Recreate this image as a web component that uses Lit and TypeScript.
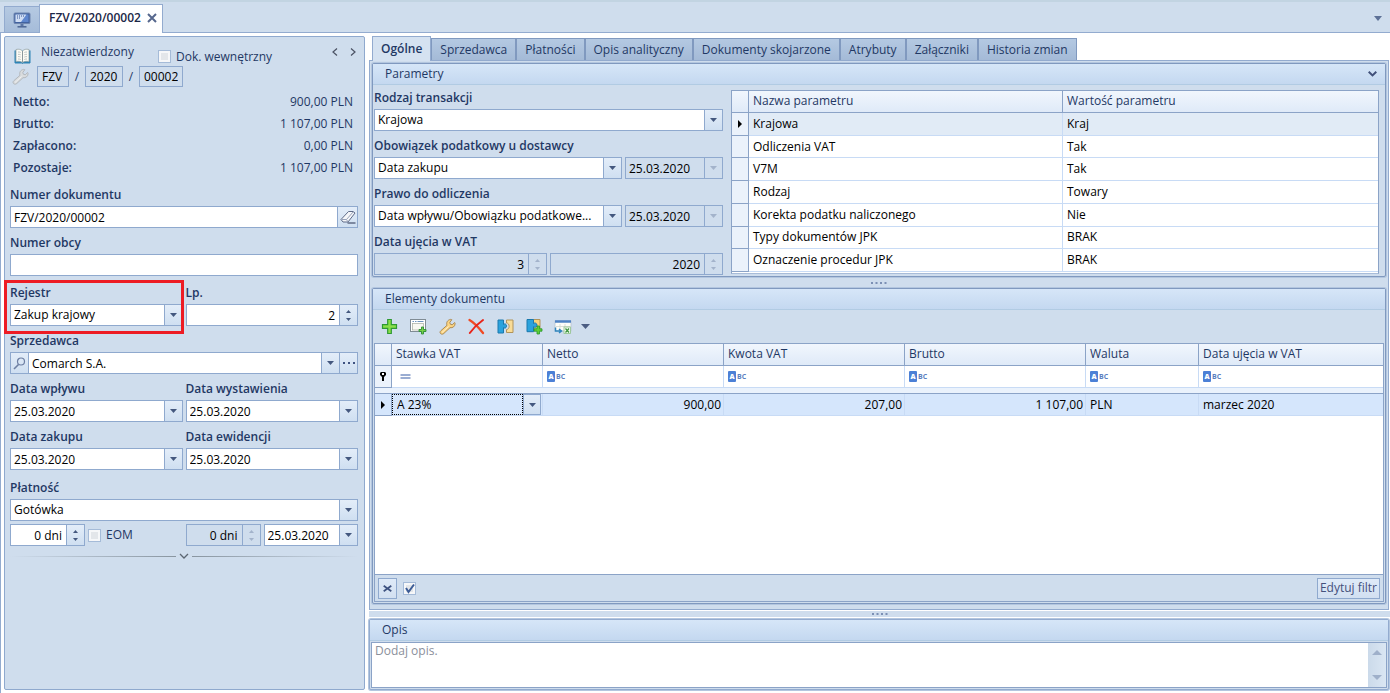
import { LitElement, html, css, svg, TemplateResult } from "lit";
import { customElement } from "lit/decorators.js";

const down = svg`<svg class="tri" width="7" height="4" viewBox="0 0 7 4"><path d="M0 0h7L3.500 4z" fill="currentColor"/></svg>`;
const up = svg`<svg class="tri" width="5" height="3" viewBox="0 0 5 3"><path d="M0 3h5L2.500 0z" fill="currentColor"/></svg>`;
const downSmall = svg`<svg class="tri" width="5" height="3" viewBox="0 0 5 3"><path d="M0 0h5L2.500 3z" fill="currentColor"/></svg>`;
const marker = svg`<svg class="tri" width="4" height="8" viewBox="0 0 4 8"><path d="M0 0l4 4-4 4z" fill="#000"/></svg>`;

const wrench = (fill: string, stroke: string) => svg`
  <svg width="17" height="17" viewBox="0 0 17 17"><path d="M1.500 15.500c-.8-1-.5-2 .4-2.800L8 7.300C7 4.500 8.500 2 11.500 1.400l1.300.3-2 2.700.5 1.800 1.900.6 2.500-2.300.4 1.200c-.2 2.800-2.400 4.400-5.100 4L5 15.300c-1 1-2.500 1.200-3.500.2z" fill=${fill} stroke=${stroke} stroke-width="1"/><path d="M3 14.500l6.500-6" stroke="#fff" stroke-width="1" opacity=".6"/></svg>`;

const icons = {
  monitor: svg`<svg width="18" height="16" viewBox="0 0 18 16"><rect x="1" y="1" width="16" height="10.500" rx="1" fill="#41629f" stroke="#6f86b0"/><path d="M2.500 2.500h13v7.500h-13z" fill="#5e86cd"/><path d="M2.500 2.500h11L8 10H2.500z" fill="#e3ecf9" opacity=".85"/><path d="M4 4h1M6 4h1M8 4h1M10 4h1M4 6h1M6 6h1" stroke="#345595"/><path d="M7.500 12h3v2h-3z" fill="#5c76a5"/><path d="M4.500 14.800h9" stroke="#4b6594" stroke-width="1.500"/></svg>`,
  book: svg`<svg width="17" height="16" viewBox="0 0 17 16"><path d="M1 2.500v12.500h6.500l1 .5 1-.5H16V2.500" fill="#2c83b5" stroke="#2c83b5"/><path d="M2 1.500c3-.8 5 0 6.500 1.500C10 1.500 12 .7 15 1.500v12c-3-.6-5 0-6.500 1-1.500-1-3.500-1.600-6.500-1z" fill="#fdfcf5" stroke="#98a6a8" stroke-width=".8"/><path d="M8.500 3v11" stroke="#8b989c" stroke-width="1"/><path d="M4 4c1 0 2 .1 2.700.5M4 6.300c1 0 2 .1 2.700.5M4 8.600c1 0 2 .1 2.700.5M4 11c1 0 2 .1 2.700.5M13 4c-1 0-2 .1-2.700.5M13 6.300c-1 0-2 .1-2.700.5M13 8.600c-1 0-2 .1-2.700.5M13 11c-1 0-2 .1-2.700.5" stroke="#a9b4b6" fill="none" stroke-width=".8"/></svg>`,
  eraser: svg`<svg width="16" height="16" viewBox="0 0 16 16"><path d="M1 10.500L8.500 2.500h4.500l2 1.500-7 9H3z" fill="#f5f6f9" stroke="#5f6b88"/><path d="M1.500 10.500H6.500l7-8M6.500 10.500l1.500 2.500" stroke="#98a3b9" fill="none"/><path d="M7.500 14h8" stroke="#4e5975" stroke-width="1.300"/></svg>`,
  search: svg`<svg width="13" height="13" viewBox="0 0 13 13"><circle cx="8" cy="4.500" r="3.500" fill="none" stroke="#6d7fa3" stroke-width="1.200"/><path d="M5.500 7.500L1 12" stroke="#6d7fa3" stroke-width="1.600"/></svg>`,
  dots: svg`<svg class="tri" width="12" height="2" viewBox="0 0 12 2"><path d="M0 0h2v2H0zM5 0h2v2H5zM10 0h2v2h-2z" fill="#3f5381"/></svg>`,
  close: svg`<svg width="10" height="10" viewBox="0 0 10 10"><path d="M1 1l8 8M9 1L1 9" stroke="#56678d" stroke-width="2"/></svg>`,
  prev: svg`<svg width="6" height="8" viewBox="0 0 6 8"><path d="M5 .5L1 4l4 3.500" fill="none" stroke="#4a5163" stroke-width="1.200"/></svg>`,
  next: svg`<svg width="6" height="8" viewBox="0 0 6 8"><path d="M1 .5L5 4 1 7.500" fill="none" stroke="#4a5163" stroke-width="1.200"/></svg>`,
  fold: svg`<svg width="10" height="6" viewBox="0 0 10 6"><path d="M1 1l4 4 4-4" fill="none" stroke="#5c6672" stroke-width="1.300"/></svg>`,
  collapse: svg`<svg width="9" height="6" viewBox="0 0 9 6"><path d="M.7.8l3.800 3.600L8.300.8" fill="none" stroke="#40507a" stroke-width="2"/></svg>`,
  pin: svg`<svg class="tri" width="6" height="9" viewBox="0 0 6 9"><path d="M1 0h4l1 1v2L4 5v4H2V5L0 3V1z" fill="#000"/><path d="M2 1h2v2H2z" fill="#fff"/></svg>`,
  equal: svg`<svg width="11" height="5" viewBox="0 0 11 5"><path d="M.5 1h10M.5 4h10" stroke="#7a93c4" stroke-width="1.300"/></svg>`,
  grip: svg`<svg width="16" height="2" viewBox="0 0 16 2"><path d="M0 0h2v2H0zM4.500 0h2v2h-2zM9 0h2v2H9zM13.500 0h2v2h-2z" fill="#7c90b4"/></svg>`,
};

const tools: [string, TemplateResult | unknown][] = [
  ["Dodaj", svg`<svg width="17" height="17" viewBox="0 0 17 17"><path d="M6.700 1.500h3.600v5.200h5.200v3.600h-5.200v5.200H6.700v-5.200H1.500V6.700h5.200z" fill="#8be04a" stroke="#2f9a33" stroke-width="1.200"/></svg>`],
  ["Dodaj z listy", svg`<svg width="17" height="17" viewBox="0 0 17 17"><rect x=".5" y="1.500" width="15" height="12" fill="#fff" stroke="#7f8b94"/><path d="M2.500 3.500h1.500M5 3.500h1.500M7.500 3.500h6" stroke="#6d93bd" stroke-width="1"/><rect x="2.500" y="5.500" width="11" height="6.500" fill="#f8f8f2" stroke="#a5aba0" stroke-width=".7"/><path d="M11.500 9h2v2.500H16v2h-2.500V16h-2v-2.500H9v-2h2.500z" fill="#76d045" stroke="#2d8f35" stroke-width=".9"/></svg>`],
  ["Zmień", wrench("#fbd583", "#ab8a55")],
  ["Usuń", svg`<svg width="17" height="17" viewBox="0 0 17 17"><path d="M1.500 2C6 4.500 11 10 15 15" fill="none" stroke="#f04a24" stroke-width="2.300" stroke-linecap="round"/><path d="M15 2C10 5.500 5 10.500 1.800 15" fill="none" stroke="#e8241a" stroke-width="2" stroke-linecap="round"/></svg>`],
  ["Połącz", svg`<svg width="17" height="17" viewBox="0 0 17 17"><path d="M1 2h5.500v4.500c.5-1 3-1 3 1.500s-2.500 2.500-3 1.500V15H1z" fill="#2ba2dc" stroke="#1a78ad"/><path d="M9.500 2h6.500v12.500H9.500v-3c3.500 0 3.500-6.500 0-6.500z" fill="#f9dc97" stroke="#b1945a"/></svg>`],
  ["Dołącz", svg`<svg width="17" height="17" viewBox="0 0 17 17"><path d="M7.500 1.500h6.500v11H7.500z" fill="#f9d27b" stroke="#b1945a"/><path d="M1 1.500h6.500v4c1-1 3.500-.5 3.500 1.700s-2.500 2.600-3.500 1.500v5H1z" fill="#2ba2dc" stroke="#1a78ad"/><path d="M11 8h2.500v2.800H16v2.400h-2.500V16H11v-2.800H8v-2.400h3z" fill="#5ed035" stroke="#25962c" stroke-width=".8"/></svg>`],
  ["Eksport", svg`<svg width="18" height="17" viewBox="0 0 18 17"><rect x="1" y="3" width="16" height="10" fill="#fdfdf8" stroke="#b9c4cf" stroke-width=".8"/><path d="M1 3.500h16" stroke="#4e82c4" stroke-width="2.500"/><path d="M2 8.500h14M6 6v7M11 6v7" stroke="#d2d7cf" stroke-width=".8"/><path d="M1.500 9.500v3.500H7M5 11l2.500 2L5 15" stroke="#3186bf" fill="none" stroke-width="1.500"/><rect x="10" y="9" width="6.500" height="6.500" fill="#f2fbee" stroke="#8fc08b" stroke-width=".8"/><path d="M11.500 10.500l3.500 4M15 10.500l-3.500 4" stroke="#3c943c" stroke-width="1.200"/></svg>`],
];

const params = [
  ["Krajowa", "Kraj"],
  ["Odliczenia VAT", "Tak"],
  ["V7M", "Tak"],
  ["Rodzaj", "Towary"],
  ["Korekta podatku naliczonego", "Nie"],
  ["Typy dokumentów JPK", "BRAK"],
  ["Oznaczenie procedur JPK", "BRAK"],
];

const totals = [
  ["Netto:", "900,00 PLN"],
  ["Brutto:", "1 107,00 PLN"],
  ["Zapłacono:", "0,00 PLN"],
  ["Pozostaje:", "1 107,00 PLN"],
];

const tabs = ["Ogólne", "Sprzedawca", "Płatności", "Opis analityczny", "Dokumenty skojarzone", "Atrybuty", "Załączniki", "Historia zmian"];

@customElement("app-root")
export class AppRoot extends LitElement {
  static styles = css`
    :host { display: flex; flex-direction: column; height: 100vh; box-sizing: border-box; overflow: hidden; background: #fff; color: #1f3864; font: 12px/16px "Open Sans", "Noto Sans", sans-serif; }
    * { box-sizing: border-box; }
    button, input, select, textarea { font: inherit; color: inherit; margin: 0; border: 0; border-radius: 0; padding: 0; background: none; outline: 0; }
    button { display: flex; align-items: center; justify-content: center; }
    svg { display: block; flex: none; }
    .grow { flex: 1; min-width: 0; }

    .windows { display: flex; align-items: flex-end; height: 33px; flex: none; padding-left: 4px; background: #cfdded; border-top: 2px solid #c2d4e2; border-bottom: 1px solid #93abcf; }
    .home { width: 36px; height: 26px; border: 1px solid #93abcf; border-bottom: 0; background: linear-gradient(#b5c9e2, #a5bcd9); }
    .doc { display: flex; align-items: center; gap: 6px; height: 29px; margin: 0 0 -1px -1px; padding: 0 5px 2px 9px; border: 1px solid #93abcf; border-bottom: 0; background: #fff; color: #1b2747; font-weight: 600; }
    .menu { align-self: center; margin: 2px 7px 0 auto; width: 10px; height: 10px; color: #5d7197; }

    .work { flex: 1; min-height: 0; display: flex; gap: 4px; padding: 3px 1px 3px 3px; border-left: 1px solid #93abcf; }
    .side { width: 361px; flex: none; padding: 6px 6px 0 5px; border: 1px solid #8fa9ce; border-radius: 2px; background: #cfdded; }
    .head { display: flex; height: 23px; align-items: center; }
    .head .ico { margin: 3px 10px 0 4px; }
    .status { width: 117px; padding-bottom: 5px; }
    .check { display: flex; align-items: center; gap: 5px; }
    .check.inner { padding-top: 4px; }
    input[type="checkbox"] { appearance: none; width: 13px; height: 13px; flex: none; border: 1px solid #a5bbd8; background: #e3e6ea; box-shadow: inset 0 0 0 2px #f6f7f9; }
    .nav { display: flex; gap: 12px; margin: 0 2px 6px auto; }
    .number { display: flex; align-items: center; height: 21px; margin-bottom: 4px; }
    .number .ico { width: 27px; padding-left: 2px; }
    .number input { height: 21px; border: 1px solid #8fa9ce; padding: 0 4px; color: #000; }
    .n3 { width: 32px; } .n4 { width: 38px; } .n5 { width: 44px; }
    .number i { font-style: normal; width: 16px; text-align: center; }
    .totals { margin: 0; padding: 0 5px 0 3px; display: grid; grid-template-columns: auto 1fr; grid-auto-rows: 22px; line-height: 22px; }
    .totals dt { font-weight: 600; }
    .totals dd { margin: 0; text-align: right; }
    .fields { display: flex; flex-direction: column; gap: 4px; padding-top: 5px; }
    .pair { display: grid; grid-template-columns: 1fr 1fr; gap: 3px; }
    .spaced { margin-top: 2px; }
    .field { min-width: 0; }
    .field > label, .caption { display: block; height: 22px; line-height: 22px; font-weight: 600; white-space: nowrap; }
    .marked { position: relative; }
    .marked::after { content: ""; position: absolute; inset: -2px -1px -8px -6px; border: 3px solid #ed1c24; pointer-events: none; z-index: 1; }
    .box { display: flex; width: 100%; height: 22px; border: 1px solid #8fa9ce; background: #fff; color: #000; }
    .box > input, .box > select { flex: 1; width: 0; min-width: 0; height: 20px; padding: 0 3px; appearance: none; opacity: 1; }
    .box > .num { text-align: right; padding-right: 4px; }
    .btn { width: 18px; flex: none; border-left: 1px solid #8fa9ce; background: linear-gradient(#e3edf9, #cfdff1); color: #44587f; display: flex; flex-direction: column; align-items: center; justify-content: center; gap: 5px; pointer-events: none; }
    button.btn { pointer-events: auto; }
    .btn.first { border-left: 0; border-right: 1px solid #8fa9ce; }
    .btn.wide { width: 20px; }
    .off { background: #cfdded; }
    .off .btn { background: none; color: #a3b3cb; }
    .row { display: flex; gap: 3px; }
    .pay { margin-top: 3px; }
    .w-days { width: 75px; flex: none; }
    .sep { display: flex; align-items: center; height: 16px; margin-top: 2px; gap: 3px; }
    .sep span { flex: 1; height: 1px; background: linear-gradient(90deg, transparent, #8995a0); }
    .sep span:last-child { background: linear-gradient(270deg, transparent, #8995a0); }

    .main { flex: 1; min-width: 0; display: flex; flex-direction: column; }
    .tabs { display: flex; align-items: flex-end; height: 24px; padding-left: 3px; flex: none; position: relative; }
    .tab { height: 22px; padding: 0 8px; border: 1px solid #8099bf; border-bottom: 0; background: linear-gradient(#b4c9e2, #a4bad7); white-space: nowrap; }
    .tab.on { height: 25px; margin: 0 0 -1px; background: #d5e2f1; font-weight: 600; border-color: #93abcf; }
    .page { flex: 1; min-height: 0; display: flex; flex-direction: column; padding: 2px 2px 5px; border: 1px solid #93abcf; background: #cfdded; }
    .group { display: flex; flex-direction: column; border: 1px solid #8099bf; border-radius: 2px; background: #cfdded; box-shadow: 0 0 0 1px #b3c6df; }
    .title { display: flex; align-items: center; justify-content: space-between; height: 21px; flex: none; margin: 0; padding: 0 8px 0 12px; font-size: 12px; font-weight: 400; background: linear-gradient(#d6e6f8, #c4d8f0); border-bottom: 1px solid #b1cbe3; }
    .split { height: 11px; flex: none; display: flex; align-items: center; justify-content: center; }
    .split.thin { height: 8px; background: #cfdded; border: solid #fff; border-width: 1px 0; margin-right: -1px; }
    .params { display: flex; gap: 8px; padding: 2px 6px 0 1px; }
    .params .fields { width: 349px; padding: 0 0 1px; flex: none; }
    .w-when { width: 98px; flex: none; }

    table { border-collapse: separate; border-spacing: 0; table-layout: fixed; width: 100%; }
    th { font-weight: 400; text-align: left; color: #1f3864; background: linear-gradient(#f1f6fd, #dfeaf8); border: solid #8ba3c7; border-width: 0 1px 1px 0; padding: 0 4px 2px; }
    td { padding: 0 4px; color: #000; border: solid #c8dbf5; border-width: 0 1px 1px 0; white-space: nowrap; overflow: hidden; }
    th:last-child, td:last-child { border-right: 0; }
    td:first-child { padding: 0; background: #ebf2fb; border-color: #8ba3c7; }
    td:first-child > svg { margin: 0 auto; }
    .frame { border: 1px solid #8ba3c7; background: #fff; }
    .ptable { height: 184px; margin-top: 3px; border-bottom-color: #a8bcd8; }
    .ptable table { height: 181px; }
    .ptable th { height: 22px; }
    .c-mark { width: 17px; } .c-name { width: 314px; }
    .ptable tbody tr:first-child td + td { background: #e1ebf6; }

    .items { flex: 1; min-height: 0; }
    .tools { display: flex; align-items: center; gap: 13px; height: 33px; padding-left: 8px; flex: none; }
    .tools button { width: 16px; height: 17px; }
    .tools .more { margin-left: -7px; color: #4c5d82; }
    .grid { flex: 1; min-height: 0; display: flex; flex-direction: column; margin: 0 1px 1px; }
    .grid th { height: 22px; }
    .c-rate { width: 151px; } .c-sum { width: 181px; } .c-cur { width: 113px; }
    .filter td { height: 22px; }
    .grid .gap td { height: 6px; background: #eaf2fc; border-right: 0; border-color: #8ba3c7; }
    .line td { height: 22px; background: #d5e6fc; }
    .line .r { text-align: right; padding-right: 2px; }
    .filter td > svg { margin-left: 4px; }
    .filter td:first-child > svg { margin: 0 auto; }
    .line .edit { padding: 0 1px 0 0; }
    .cell { display: flex; height: 21px; }
    .cell select { flex: 1; min-width: 0; padding: 0 4px; appearance: none; border: 1px dotted #000; }
    .cell .btn { border: 1px solid #8fa9ce; }
    .abc { display: flex; align-items: center; font-size: 7px; line-height: 11px; font-weight: 700; color: #5c7fbf; }
    .abc b { width: 8px; background: #4c80d6; color: #fff; text-align: center; margin-right: 1px; border-radius: 1px; }
    .foot { display: flex; align-items: center; gap: 6px; height: 27px; margin-top: auto; padding: 0 3px; border-top: 1px solid #8ba3c7; background: #cfdded; }
    .foot button { height: 21px; border: 1px solid #8fa9ce; background: linear-gradient(#dfeaf8, #d2e0f1); color: #44507c; }
    .foot .x { width: 19px; }
    .foot .edit { margin-left: auto; padding: 0 2px; }
    .foot .check { position: relative; }
    .foot .check svg { position: absolute; left: 2px; top: 1px; pointer-events: none; }

    .note { flex: none; margin-top: 1px; border-color: #93abcf; padding-bottom: 1px; }
    .note .title { margin-bottom: 1px; }
    .memo { display: flex; height: 46px; margin: 0 1px; border: 1px solid #8ba3c7; background: #fff; }
    .memo textarea { flex: 1; resize: none; padding: 0 3px; overflow: hidden; color: #000; }
    .memo textarea::placeholder { color: #8b8f9b; opacity: 1; }
    .scroll { width: 18px; display: flex; flex-direction: column; align-items: center; justify-content: space-between; padding: 7px 0; background: linear-gradient(90deg, #cbdaea, #dae6f3); color: #9fb0ca; }
  `;

  private label(id: string, text: string) {
    return text ? html`<label for=${id}>${text}</label>` : "";
  }

  private combo(id: string, text: string, value: string) {
    return html`<div class="field grow">${this.label(id, text)}
      <div class="box"><select id=${id} aria-label=${text || value}><option>${value}</option></select><span class="btn">${down}</span></div></div>`;
  }

  private date(id: string, text: string, value: string, disabled = false) {
    return html`<div class="field">${this.label(id, text)}
      <div class="box ${disabled ? "off" : ""}"><input id=${id} aria-label=${text || "Data"} .value=${value} ?disabled=${disabled} /><button class="btn" aria-label="Kalendarz" ?disabled=${disabled}>${down}</button></div></div>`;
  }

  private spin(id: string, text: string, value: string, disabled = false) {
    return html`<div class="field">${this.label(id, text)}
      <div class="box ${disabled ? "off" : ""}"><input class="num" id=${id} aria-label=${text || "Liczba"} .value=${value} ?disabled=${disabled} /><span class="btn">${up}${downSmall}</span></div></div>`;
  }

  private side() {
    return html`<aside class="side">
      <div class="head">
        <span class="ico">${icons.book}</span><span class="status">Niezatwierdzony</span>
        <label class="check inner"><input type="checkbox" />Dok. wewnętrzny</label>
        <span class="nav"><button aria-label="Poprzedni">${icons.prev}</button><button aria-label="Następny">${icons.next}</button></span>
      </div>
      <div class="number">
        <span class="ico">${wrench("#d9dcde", "#b3b8bd")}</span>
        <input class="n3" aria-label="Symbol" value="FZV" /><i>/</i><input class="n4" aria-label="Rok" value="2020" /><i>/</i><input class="n5" aria-label="Numer" value="00002" />
      </div>
      <dl class="totals">${totals.map(([k, v]) => html`<dt>${k}</dt><dd>${v}</dd>`)}</dl>
      <div class="fields">
        <div class="field">${this.label("doc", "Numer dokumentu")}
          <div class="box"><input id="doc" value="FZV/2020/00002" /><button class="btn wide" aria-label="Wyczyść">${icons.eraser}</button></div></div>
        <div class="field">${this.label("ext", "Numer obcy")}<div class="box"><input id="ext" /></div></div>
        <div class="pair spaced"><div class="marked">${this.combo("reg", "Rejestr", "Zakup krajowy")}</div>${this.spin("lp", "Lp.", "2")}</div>
        <div class="field">${this.label("seller", "Sprzedawca")}
          <div class="box"><button class="btn first" aria-label="Szukaj">${icons.search}</button><input id="seller" value="Comarch S.A." /><button class="btn" aria-label="Rozwiń">${down}</button><button class="btn" aria-label="Wybierz">${icons.dots}</button></div></div>
        <div class="pair">${this.date("d1", "Data wpływu", "25.03.2020")}${this.date("d2", "Data wystawienia", "25.03.2020")}</div>
        <div class="pair">${this.date("d3", "Data zakupu", "25.03.2020")}${this.date("d4", "Data ewidencji", "25.03.2020")}</div>
        <div class="pay">${this.combo("pay", "Płatność", "Gotówka")}</div>
      </div>
      <div class="pair pay">
        <div class="row"><div class="w-days">${this.spin("days", "", "0 dni")}</div><label class="check"><input type="checkbox" />EOM</label></div>
        <div class="row"><div class="w-days">${this.spin("days2", "", "0 dni", true)}</div><div class="grow">${this.date("due", "", "25.03.2020")}</div></div>
      </div>
      <div class="sep"><span></span>${icons.fold}<span></span></div>
    </aside>`;
  }

  private parameters() {
    return html`<section class="group">
      <h2 class="title">Parametry ${icons.collapse}</h2>
      <div class="params">
        <div class="fields">
          ${this.combo("kind", "Rodzaj transakcji", "Krajowa")}
          <div><label class="caption" for="duty">Obowiązek podatkowy u dostawcy</label>
            <div class="row">${this.combo("duty", "", "Data zakupu")}<div class="w-when">${this.date("dutyDate", "", "25.03.2020", true)}</div></div></div>
          <div><label class="caption" for="right">Prawo do odliczenia</label>
            <div class="row">${this.combo("right", "", "Data wpływu/Obowiązku podatkowe...")}<div class="w-when">${this.date("rightDate", "", "25.03.2020", true)}</div></div></div>
          <div><label class="caption" for="month">Data ujęcia w VAT</label>
            <div class="pair">${this.spin("month", "", "3", true)}${this.spin("year", "", "2020", true)}</div></div>
        </div>
        <div class="frame ptable grow"><table>
          <colgroup><col class="c-mark" /><col class="c-name" /><col /></colgroup>
          <thead><tr><th></th><th>Nazwa parametru</th><th>Wartość parametru</th></tr></thead>
          <tbody>${params.map(([k, v], i) => html`<tr><td>${i === 0 ? marker : ""}</td><td>${k}</td><td>${v}</td></tr>`)}</tbody>
        </table></div>
      </div>
    </section>`;
  }

  private items() {
    const abc = html`<td><span class="abc"><b>A</b>BC</span></td>`;
    return html`<section class="group items">
      <h2 class="title">Elementy dokumentu</h2>
      <div class="tools">${tools.map(([name, icon]) => html`<button aria-label=${name}>${icon}</button>`)}<button class="more" aria-label="Więcej"><svg width="9" height="5" viewBox="0 0 9 5"><path d="M0 0h9L4.500 5z" fill="currentColor"/></svg></button></div>
      <div class="grid frame">
        <table>
          <colgroup><col class="c-mark" /><col class="c-rate" /><col class="c-sum" /><col class="c-sum" /><col class="c-sum" /><col class="c-cur" /><col /></colgroup>
          <thead><tr><th></th><th>Stawka VAT</th><th>Netto</th><th>Kwota VAT</th><th>Brutto</th><th>Waluta</th><th>Data ujęcia w VAT</th></tr></thead>
          <tbody>
            <tr class="filter"><td>${icons.pin}</td><td>${icons.equal}</td>${abc}${abc}${abc}${abc}${abc}</tr>
            <tr class="gap"><td colspan="7"></td></tr>
            <tr class="line"><td>${marker}</td><td class="edit"><div class="cell"><select aria-label="Stawka VAT"><option>A 23%</option></select><span class="btn">${down}</span></div></td>
              <td class="r">900,00</td><td class="r">207,00</td><td class="r">1 107,00</td><td>PLN</td><td>marzec 2020</td></tr>
          </tbody>
        </table>
        <div class="foot">
          <button class="x" aria-label="Usuń filtr"><svg width="9" height="7" viewBox="0 0 9 7"><path d="M.7.700l7.600 5.600M8.300.700L.7 6.300" stroke="#3f5381" stroke-width="1.700"/></svg></button>
          <label class="check"><input type="checkbox" checked aria-label="Filtr aktywny" /><svg width="10" height="11" viewBox="0 0 10 11"><path d="M1 5l2.500 4L9 1.500" fill="none" stroke="#3c5c96" stroke-width="2"/></svg></label>
          <button class="edit">Edytuj filtr</button>
        </div>
      </div>
    </section>`;
  }

  render() {
    return html`
      <header class="windows">
        <button class="home" aria-label="Pulpit">${icons.monitor}</button>
        <div class="doc">FZV/2020/00002 <button aria-label="Zamknij">${icons.close}</button></div>
        <button class="menu" aria-label="Lista okien"><svg width="8" height="5" viewBox="0 0 8 5"><path d="M0 0h8L4 5z" fill="currentColor"/></svg></button>
      </header>
      <div class="work">
        ${this.side()}
        <main class="main">
          <nav class="tabs" role="tablist">${tabs.map((t, i) => html`<button role="tab" class="tab ${i === 0 ? "on" : ""}">${t}</button>`)}</nav>
          <div class="page">
            ${this.parameters()}
            <div class="split">${icons.grip}</div>
            ${this.items()}
          </div>
          <div class="split thin">${icons.grip}</div>
          <section class="group note">
            <h2 class="title">Opis</h2>
            <div class="memo"><textarea aria-label="Opis" placeholder="Dodaj opis."></textarea><div class="scroll"><svg width="10" height="5" viewBox="0 0 10 5"><path d="M0 5h10L5 0z" fill="currentColor"/></svg><svg width="10" height="5" viewBox="0 0 10 5"><path d="M0 0h10L5 5z" fill="currentColor"/></svg></div></div>
          </section>
        </main>
      </div>`;
  }
}
